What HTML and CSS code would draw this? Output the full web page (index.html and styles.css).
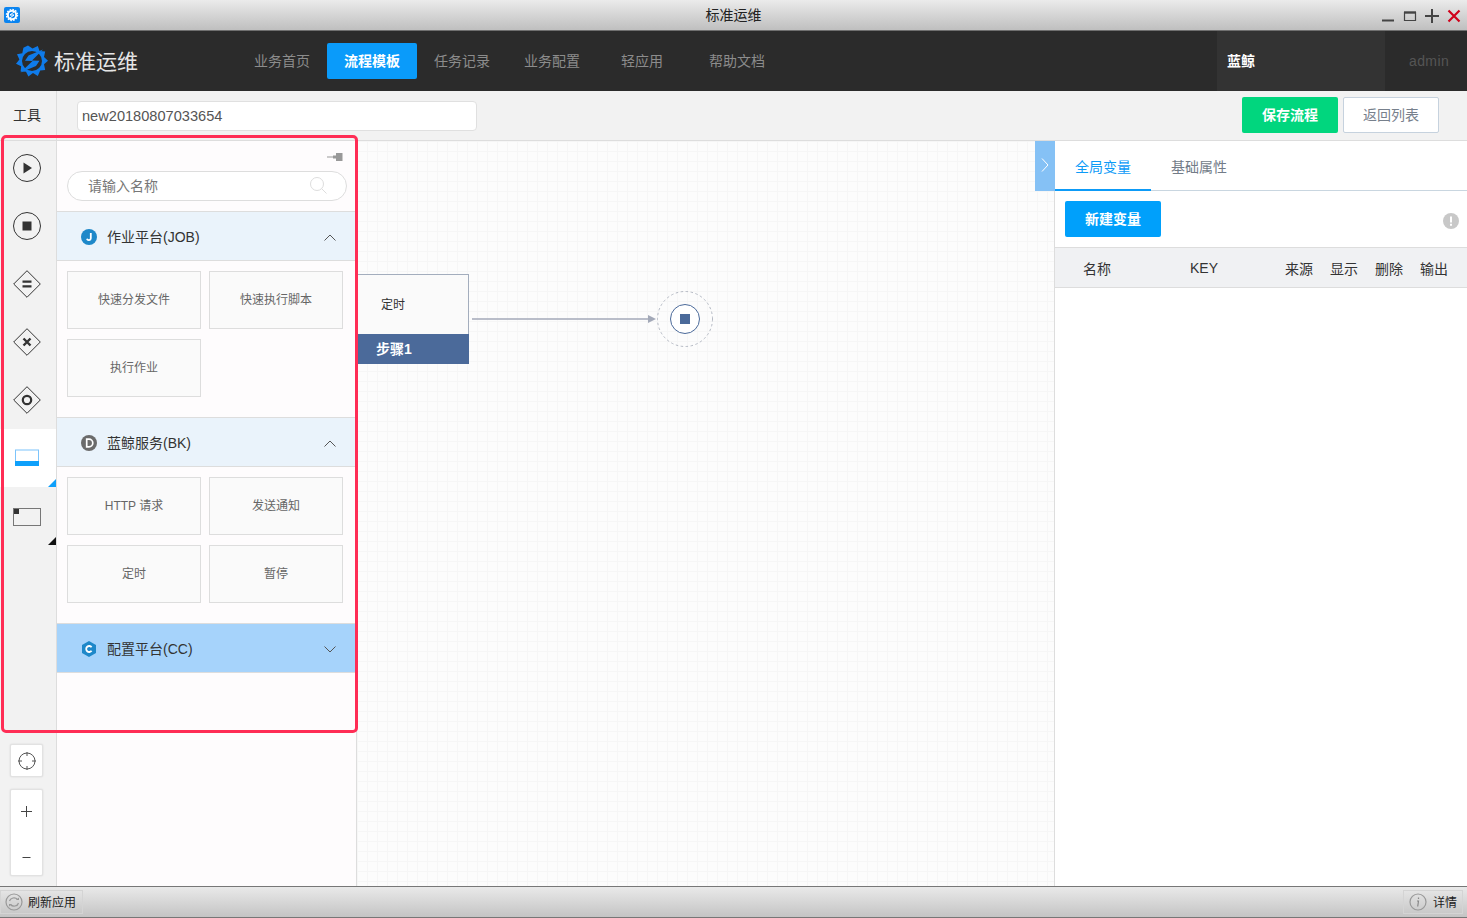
FILE: index.html
```html
<!DOCTYPE html>
<html lang="zh">
<head>
<meta charset="utf-8">
<title>标准运维</title>
<link rel="stylesheet" href="styles.css">
</head>
<body>
<div class="app">
  <header class="titlebar">
    <svg class="app-icon" viewBox="0 0 16 16"><rect width="16" height="16" rx="2" fill="#0a84f0"/><circle cx="8" cy="8" r="4.2" fill="none" stroke="#fff" stroke-width="2"/><circle cx="8" cy="8" r="5.6" fill="none" stroke="#fff" stroke-width="1.2" stroke-dasharray="1.6 1.3"/><path d="M10 5 6 8h4l-4 3" fill="none" stroke="#fff" stroke-width="1"/></svg>
    <span class="title">标准运维</span>
    <div class="win-controls">
      <svg class="win-icon" viewBox="0 0 14 14"><path d="M1 11.5h12" stroke="#444" stroke-width="2"/></svg>
      <svg class="win-icon" viewBox="0 0 14 14"><path d="M1.5 3.5h11v8h-11z" fill="none" stroke="#444" stroke-width="1.2"/><path d="M1 3.5h12" stroke="#444" stroke-width="2.4"/></svg>
      <svg class="win-icon" viewBox="0 0 14 14"><path d="M7 0v14M0 7h14" stroke="#444" stroke-width="2"/></svg>
      <svg class="win-icon" viewBox="0 0 14 14"><path d="M1.5 1.5l11 11M12.5 1.5l-11 11" stroke="#d0021b" stroke-width="2.2"/></svg>
    </div>
  </header>

  <nav class="topnav">
    <div class="brand">
      <svg class="brand-icon" viewBox="0 0 32 32">
        <path fill="#0f7bea" d="M12 .5 16.500 3.600 21.800 1 23.600 6 29.200 6.400 28 12 32 15.800 28 19.300 29.200 25 24.200 25.400 21.800 31 17 28 12.400 31.500 10 26.800 4.600 26.500 5.200 21.300 0 18.700 3.400 14.500 1 9.300 6.300 8.200 7.400 2.800Z"/>
        <circle cx="16" cy="16" r="10" fill="#2b2b2b"/>
        <path fill="#0f7bea" d="M27 4.500 12.500 10.500 9 15.800 16.500 16 4.500 27.500 20 21 23.500 15.800 16 15.600Z"/>
      </svg>
      <span class="brand-name">标准运维</span>
    </div>
    <ul class="nav-list">
      <li class="nav-item">业务首页</li>
      <li class="nav-item active">流程模板</li>
      <li class="nav-item">任务记录</li>
      <li class="nav-item">业务配置</li>
      <li class="nav-item">轻应用</li>
      <li class="nav-item wide">帮助文档</li>
    </ul>
    <div class="biz">蓝鲸</div>
    <div class="user">admin</div>
  </nav>

  <div class="toolbar">
    <div class="tool-label">工具</div>
    <input class="name-input" type="text" value="new20180807033654">
    <button class="btn btn-save">保存流程</button>
    <button class="btn btn-back">返回列表</button>
  </div>

  <main class="workspace">
    <aside class="tools">
      <div class="tool-list">
        <div class="tool"><svg class="tool-icon" viewBox="0 0 28 28"><circle cx="14" cy="14" r="13.5" fill="none" stroke="#333"/><path d="M10.5 8.5 19 14l-8.500 5.500z" fill="#333"/></svg></div>
        <div class="tool"><svg class="tool-icon" viewBox="0 0 28 28"><circle cx="14" cy="14" r="13.500" fill="none" stroke="#333"/><rect x="9.500" y="9.500" width="9" height="9" fill="#333"/></svg></div>
        <div class="tool"><svg class="tool-icon" viewBox="0 0 28 28"><path d="M14 .7 27.300 14 14 27.300 .7 14z" fill="none" stroke="#333"/><path d="M9.500 11.700h9M9.500 16.300h9" stroke="#333" stroke-width="2.200"/></svg></div>
        <div class="tool"><svg class="tool-icon" viewBox="0 0 28 28"><path d="M14 .7 27.300 14 14 27.300 .7 14z" fill="none" stroke="#333"/><path d="M10.500 10.500l7 7M17.500 10.500l-7 7" stroke="#333" stroke-width="2.400"/></svg></div>
        <div class="tool"><svg class="tool-icon" viewBox="0 0 28 28"><path d="M14 .7 27.300 14 14 27.300 .7 14z" fill="none" stroke="#333"/><circle cx="14" cy="14" r="4.200" fill="none" stroke="#333" stroke-width="2.200"/></svg></div>
        <div class="tool active corner-blue"><svg class="tool-icon" viewBox="0 0 28 28"><rect x="2.500" y="6" width="23" height="15.500" fill="#fff" stroke="#7cc4fb"/><rect x="2" y="17" width="24" height="5" fill="#0ea0fb"/></svg></div>
        <div class="tool corner-black"><svg class="tool-icon" viewBox="0 0 28 28"><rect x=".5" y="6.500" width="27" height="17" fill="#f2f2f2" stroke="#777"/><rect x="1" y="7" width="5" height="5" fill="#333"/></svg></div>
      </div>
      <div class="tool-bottom">
        <div class="mini-box target">
          <svg class="target-icon" viewBox="0 0 18 18"><circle cx="9" cy="9" r="8" fill="none" stroke="#555"/><path d="M9 0v4M9 14v4M0 9h4M14 9h4" stroke="#555"/></svg>
        </div>
        <div class="mini-box zoom">
          <svg class="zoom-icon" viewBox="0 0 11 11"><path d="M5.500 0v11M0 5.500h11" stroke="#444"/></svg>
          <svg class="zoom-icon" viewBox="0 0 11 11"><path d="M1.500 5.500h8" stroke="#444"/></svg>
        </div>
      </div>
    </aside>

    <section class="palette">
      <div class="pin-row">
        <svg class="pin" viewBox="0 0 16 10"><path d="M0 5h7" stroke="#999"/><path d="M6 3.500h3V1h6.500v8H9V6.500H6z" fill="#999"/></svg>
      </div>
      <div class="search">
        <span class="search-text">请输入名称</span>
        <svg class="search-icon" viewBox="0 0 17 17"><circle cx="7" cy="7" r="6.500" fill="none" stroke="#ddd"/><path d="M11.700 11.700l4.800 4.800" stroke="#ddd"/></svg>
      </div>

      <div class="group-head">
        <svg class="group-icon" viewBox="0 0 16 16"><circle cx="8" cy="8" r="8" fill="#1e88c9"/><path d="M9.800 4v5.200a2 2 0 0 1-3.900.6" fill="none" stroke="#fff" stroke-width="1.800"/></svg>
        <span class="group-title">作业平台(JOB)</span>
        <svg class="chev" viewBox="0 0 12 7"><path d="M.5 6.500 6 1l5.500 5.500" fill="none" stroke="#555"/></svg>
      </div>
      <div class="group-body">
        <div class="node-item">快速分发文件</div>
        <div class="node-item">快速执行脚本</div>
        <div class="node-item">执行作业</div>
      </div>

      <div class="group-head">
        <svg class="group-icon" viewBox="0 0 16 16"><circle cx="8" cy="8" r="8" fill="#6b6b6b"/><path d="M5.700 4.200h2.300a3.800 3.800 0 0 1 0 7.600H5.700z" fill="none" stroke="#fff" stroke-width="1.700"/></svg>
        <span class="group-title">蓝鲸服务(BK)</span>
        <svg class="chev" viewBox="0 0 12 7"><path d="M.5 6.500 6 1l5.500 5.500" fill="none" stroke="#555"/></svg>
      </div>
      <div class="group-body">
        <div class="node-item">HTTP 请求</div>
        <div class="node-item">发送通知</div>
        <div class="node-item">定时</div>
        <div class="node-item">暂停</div>
      </div>

      <div class="group-head selected">
        <svg class="group-icon" viewBox="0 0 16 16"><path d="M8 0 15 4v8l-7 4-7-4V4z" fill="#1e88c9"/><path d="M10.600 6.200a3 3 0 1 0 0 3.600" fill="none" stroke="#fff" stroke-width="1.800"/></svg>
        <span class="group-title">配置平台(CC)</span>
        <svg class="chev" viewBox="0 0 12 7"><path d="M.5 .5 6 6l5.500-5.500" fill="none" stroke="#555"/></svg>
      </div>
    </section>

    <section class="canvas">
      <div class="flow-node">
        <div class="flow-node-body">定时</div>
        <div class="flow-node-foot">步骤1</div>
      </div>
      <svg class="flow-line" viewBox="0 0 186 10"><path d="M0 5h178" stroke="#a3a9b8" stroke-width="1.500"/><path d="M176 1l8 4-8 4z" fill="#a3a9b8"/></svg>
      <svg class="flow-end" viewBox="0 0 56 56"><circle cx="28" cy="28" r="27.500" fill="none" stroke="#b5bac4" stroke-dasharray="2.500 2.500"/><circle cx="28" cy="28" r="14.500" fill="#fff" stroke="#4b6a9a"/><rect x="23" y="23" width="10" height="10" fill="#4b6a9a"/></svg>
      <div class="panel-toggle"><svg class="toggle-icon" viewBox="0 0 8 14"><path d="M1 .5 7 7l-6 6.500" fill="none" stroke="#fff"/></svg></div>
    </section>

    <aside class="props">
      <div class="tabs">
        <div class="tab active">全局变量</div>
        <div class="tab">基础属性</div>
      </div>
      <div class="props-action">
        <button class="btn btn-new">新建变量</button>
        <svg class="hint" viewBox="0 0 16 16"><circle cx="8" cy="8" r="8" fill="#c8c8c8"/><path d="M8 3.500v6M8 10.800v2" stroke="#fff" stroke-width="2"/></svg>
      </div>
      <div class="var-head">
        <span>名称</span><span>KEY</span><span>来源</span><span>显示</span><span>删除</span><span>输出</span>
      </div>
    </aside>
  </main>

  <footer class="statusbar">
    <div class="status-btn">
      <svg class="status-icon" viewBox="0 0 18 18"><circle cx="9" cy="9" r="8" fill="none" stroke="#999" stroke-width="1.200"/><path d="M4.500 8a4.500 4 0 0 1 8-1.500M13.500 10a4.500 4 0 0 1-8 1.500" fill="none" stroke="#999" stroke-width="1.200"/><path d="M11 7h3V4.500zM7 11H4v2.500z" fill="#999"/></svg>
      <span class="status-text">刷新应用</span>
    </div>
    <div class="status-btn details">
      <svg class="status-icon" viewBox="0 0 18 18"><circle cx="9" cy="9" r="8" fill="none" stroke="#999" stroke-width="1.200"/><path d="M9.500 4.500v1.500M8 8h1.500l-.8 5.500" fill="none" stroke="#888" stroke-width="1.200"/></svg>
      <span class="status-text">详情</span>
    </div>
  </footer>

  <div class="highlight"></div>
</div>
</body>
</html>
```
FILE: styles.css
```css
* { box-sizing: border-box; }
html, body { margin: 0; padding: 0; height: 100%; }
body {
  font-family: "Liberation Sans", "Noto Sans CJK SC", sans-serif;
  font-size: 14px;
  color: #333;
  overflow: hidden;
}
.app {
  position: relative;
  display: flex;
  flex-direction: column;
  height: 918px;
  background: #fff;
}

/* title bar */
.titlebar {
  position: relative;
  flex: 0 0 31px;
  display: flex;
  align-items: center;
  justify-content: center;
  background: linear-gradient(#ebebeb, #bfbfbf);
  border-bottom: 1px solid #6f6f6f;
}
.app-icon { position: absolute; left: 4px; top: 7px; width: 16px; height: 16px; }
.title { font-size: 14px; color: #222; line-height: 30px; }
.win-controls {
  position: absolute;
  right: 6px;
  top: 9px;
  display: flex;
  gap: 8px;
}
.win-icon { width: 14px; height: 14px; display: block; }

/* top nav */
.topnav {
  flex: 0 0 60px;
  display: flex;
  align-items: center;
  background: #2b2b2b;
}
.brand { width: 237px; display: flex; align-items: center; padding-left: 16px; }
.brand-icon { width: 32px; height: 32px; display: block; }
.brand-name { margin: -3px 0 0 6px; font-size: 21px; color: #e6e6e6; }
.nav-list { flex: 1; display: flex; margin: 0; padding: 0; list-style: none; }
.nav-item {
  width: 90px;
  height: 36px;
  line-height: 36px;
  text-align: center;
  color: #8c8c8c;
  border-radius: 2px;
}
.nav-item.wide { width: 100px; }
.nav-item.active { background: #0a9bfa; color: #fff; font-weight: 700; }
.biz {
  width: 168px;
  height: 100%;
  padding-left: 10px;
  line-height: 60px;
  background: #333;
  color: #fff;
  font-weight: 700;
}
.user {
  width: 82px;
  padding-left: 24px;
  color: #555;
  line-height: 60px;
  letter-spacing: .4px;
}

/* toolbar */
.toolbar {
  flex: 0 0 50px;
  display: flex;
  align-items: flex-start;
  background: #f2f2f2;
  border-bottom: 1px solid #ddd;
}
.tool-label {
  width: 57px;
  height: 49px;
  line-height: 48px;
  padding-left: 13px;
  border-right: 1px solid #ddd;
}
.name-input {
  width: 400px;
  height: 30px;
  margin: 10px 0 0 20px;
  padding: 0 4px;
  border: 1px solid #e0e0e0;
  border-radius: 4px;
  background: #fff;
  font: 14.600px "Liberation Sans", sans-serif;
  color: #555;
  outline: none;
}
.btn {
  width: 96px;
  height: 36px;
  padding: 0 0 2px;
  border: 1px solid transparent;
  border-radius: 2px;
  font-family: inherit;
  font-size: 14px;
}
.btn-save { margin: 6px 0 0 765px; background: #01d67e; color: #fff; font-weight: 700; }
.btn-back { margin: 6px 0 0 5px; background: #fff; border-color: #c6d2de; color: #77808c; }
.btn-new { background: #00a0fb; color: #fff; font-weight: 700; }

/* workspace */
.workspace { flex: 1; display: flex; min-height: 0; }

.tools {
  width: 57px;
  display: flex;
  flex-direction: column;
  background: #f2f2f2;
  border-right: 1px solid #ddd;
}
.tool-list { margin-top: -2px; }
.tool {
  position: relative;
  height: 58px;
  padding: 0 2px 1px 0;
  display: flex;
  align-items: center;
  justify-content: center;
}
.tool.active { background: #fff; }
.tool.corner-blue::after,
.tool.corner-black::after {
  content: "";
  position: absolute;
  right: 0;
  bottom: 0;
  border-style: solid;
  border-width: 0 0 8px 8px;
  border-color: transparent transparent #0ea0fb transparent;
}
.tool.corner-black::after { border-bottom-color: #111; }
.tool-icon { width: 28px; height: 28px; display: block; }
.tool-bottom {
  margin-top: auto;
  padding: 0 0 10px 10px;
  display: flex;
  flex-direction: column;
  gap: 12px;
}
.mini-box {
  width: 33px;
  background: #fff;
  border: 1px solid #e2e2e2;
  border-radius: 2px;
  box-shadow: 0 0 2px rgba(0, 0, 0, .12);
  display: flex;
  align-items: center;
  justify-content: center;
}
.target { height: 33px; }
.target-icon { width: 18px; height: 18px; }
.zoom {
  height: 87px;
  flex-direction: column;
  justify-content: flex-start;
  gap: 35px;
  padding-top: 16px;
}
.zoom-icon { width: 11px; height: 11px; display: block; }

/* palette */
.palette {
  width: 300px;
  background: #fefcfd;
  border-right: 1px solid #ddd;
}
.pin-row { height: 30px; display: flex; justify-content: flex-end; padding: 11px 13px 0 0; }
.pin { width: 16px; height: 10px; display: block; }
.search {
  position: relative;
  width: 280px;
  height: 30px;
  margin: 0 0 10px 10px;
  border: 1px solid #ddd;
  border-radius: 15px;
  background: #fff;
  line-height: 28px;
  padding-left: 20px;
}
.search-text { color: #777; }
.search-icon { position: absolute; right: 19px; top: 5px; width: 17px; height: 17px; }
.group-head {
  height: 50px;
  display: flex;
  align-items: center;
  padding: 0 20px 0 24px;
  background: #eaf3fb;
  border-top: 1px solid #ddd;
  border-bottom: 1px solid #ddd;
}
.group-head.selected { background: #a6d3fb; }
.group-icon { width: 16px; height: 16px; display: block; flex: none; margin-top: 2px; }
.group-title { flex: 1; margin-left: 10px; color: #333; }
.chev { width: 12px; height: 7px; display: block; margin-top: 2px; }
.group-body {
  display: grid;
  grid-template-columns: 134px 134px;
  grid-auto-rows: 58px;
  gap: 10px 8px;
  padding: 10px 0 20px 10px;
}
.node-item {
  display: flex;
  align-items: center;
  justify-content: center;
  padding-bottom: 4px;
  background: #fafafa;
  border: 1px solid #ddd;
  font-size: 12px;
  color: #666;
}

/* canvas */
.canvas {
  position: relative;
  flex: 1;
  background-color: #fcfcfc;
  background-image:
    linear-gradient(#f6f6f6 1px, transparent 1px),
    linear-gradient(90deg, #f6f6f6 1px, transparent 1px);
  background-size: 10px 10px;
  box-shadow: inset -1px 0 #ddd;
  overflow: hidden;
}
.flow-node {
  position: absolute;
  left: 0;
  top: 133px;
  width: 112px;
  height: 90px;
  display: flex;
  flex-direction: column;
}
.flow-node-body {
  flex: 1;
  padding: 21px 0 0 24px;
  background: #fafafa;
  border: 1px solid #a3adbd;
  border-left: 0;
  border-bottom: 0;
  font-size: 12px;
  line-height: 18px;
}
.flow-node-foot {
  height: 30px;
  padding-left: 19px;
  line-height: 30px;
  background: #4b6a9a;
  color: #fff;
  font-weight: 700;
}
.flow-line { position: absolute; left: 115px; top: 173px; width: 186px; height: 10px; }
.flow-end { position: absolute; left: 300px; top: 150px; width: 56px; height: 56px; }
.panel-toggle {
  position: absolute;
  right: 0;
  top: 0;
  width: 20px;
  height: 50px;
  padding-bottom: 2px;
  display: flex;
  align-items: center;
  justify-content: center;
  background: #85c1f5;
}
.toggle-icon { width: 8px; height: 14px; display: block; }

/* props */
.props { width: 412px; background: #fff; }
.tabs {
  height: 50px;
  display: flex;
  border-bottom: 1px solid #c9d6e0;
}
.tab {
  padding: 0 20px;
  height: 50px;
  line-height: 52px;
  color: #737c88;
}
.tab.active { color: #0d9bf7; border-bottom: 2px solid #0d9bf7; }
.props-action {
  height: 56px;
  display: flex;
  align-items: center;
  justify-content: space-between;
  padding: 0 8px 0 10px;
}
.hint { width: 16px; height: 16px; display: block; margin-top: 4px; }
.var-head {
  height: 41px;
  display: grid;
  grid-template-columns: 107px 95px 45px 45px 45px 1fr;
  align-items: center;
  padding-left: 28px;
  background: #f0f1f3;
  border-top: 1px solid #ddd;
  border-bottom: 1px solid #ddd;
  color: #333;
}

/* status bar */
.statusbar {
  flex: 0 0 32px;
  display: flex;
  align-items: center;
  justify-content: space-between;
  padding: 0 4px 0 0;
  background: linear-gradient(#e9e9e9, #c4c4c4);
  border-top: 1px solid #777;
  border-bottom: 1px solid #777;
  font-size: 12px;
  color: #222;
}
.status-btn {
  height: 24px;
  display: flex;
  align-items: center;
  gap: 5px;
  padding: 0 6px 0 4px;
  border: 1px solid #d4d4d4;
}
.status-btn.details { padding: 0 5px 0 5px; gap: 6px; }
.status-text { margin-top: -2px; }
.status-icon { width: 18px; height: 18px; display: block; }

/* annotation overlay */
.highlight {
  position: absolute;
  left: 1px;
  top: 135px;
  width: 357px;
  height: 598px;
  border: 3px solid #ff2d55;
  border-radius: 5px;
  pointer-events: none;
}
```
